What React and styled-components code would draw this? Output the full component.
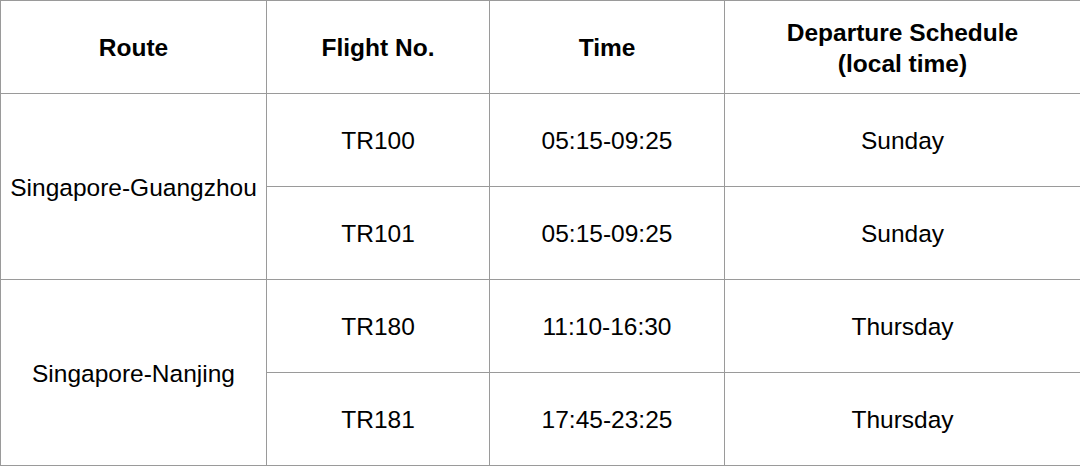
import React from "react";
import styled, { createGlobalStyle } from "styled-components";

const Global = createGlobalStyle`
  html, body { margin: 0; padding: 0; background: #ffffff; }
  body { font-family: "Liberation Sans", Arial, sans-serif; }
`;

const Table = styled.table`
  width: 1080px;
  border-collapse: collapse;
  table-layout: fixed;
  font-family: "Liberation Sans", Arial, sans-serif;
  font-size: 24.5px;
  color: #000;
`;

const Row = styled.tr`
  height: 93px;
`;

const Head = styled.th`
  border: 1px solid #9a9a9a;
  font-weight: bold;
  text-align: center;
  vertical-align: middle;
  padding: 1px 4px 0;
  line-height: 31px;
`;

const Cell = styled.td`
  border: 1px solid #9a9a9a;
  text-align: center;
  vertical-align: middle;
  padding: 2px 4px 0;
  line-height: 28px;
  white-space: nowrap;
`;

const cols = [266, 223, 235, 356];

const groups = [
  {
    route: "Singapore-Guangzhou",
    flights: [
      ["TR100", "05:15-09:25", "Sunday"],
      ["TR101", "05:15-09:25", "Sunday"],
    ],
  },
  {
    route: "Singapore-Nanjing",
    flights: [
      ["TR180", "11:10-16:30", "Thursday"],
      ["TR181", "17:45-23:25", "Thursday"],
    ],
  },
];

export default function App() {
  return (
    <>
      <Global />
      <Table>
        <colgroup>
          {cols.map((w, i) => (
            <col key={i} style={{ width: w }} />
          ))}
        </colgroup>
        <thead>
          <Row>
            <Head>Route</Head>
            <Head>Flight No.</Head>
            <Head>Time</Head>
            <Head>
              Departure Schedule
              <br />
              (local time)
            </Head>
          </Row>
        </thead>
        <tbody>
          {groups.map((g) =>
            g.flights.map((f, i) => (
              <Row key={f[0]}>
                {i === 0 && <Cell rowSpan={g.flights.length}>{g.route}</Cell>}
                <Cell>{f[0]}</Cell>
                <Cell>{f[1]}</Cell>
                <Cell>{f[2]}</Cell>
              </Row>
            ))
          )}
        </tbody>
      </Table>
    </>
  );
}
